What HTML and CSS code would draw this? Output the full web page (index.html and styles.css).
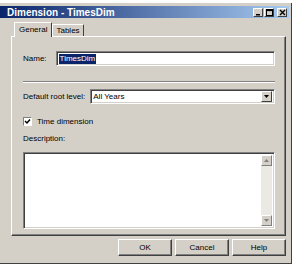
FILE: index.html
```html
<!DOCTYPE html>
<html lang="en">
  <head>
    <meta charset="UTF-8" />
    <title>Dimension - TimesDim</title>
    <link rel="stylesheet" href="styles.css">
  </head>
  <body>
    <div class="window">
      <div class="titlebar">
        <span class="title">Dimension - TimesDim</span>
        <div class="controls">
          <span class="ctl"><svg width="7" height="7" viewBox="0 0 7 7"><rect x="1" y="5" width="4" height="1.5" fill="#000"/></svg></span>
          <span class="ctl"><svg width="7" height="7" viewBox="0 0 7 7"><rect x="0.5" y="0.5" width="6" height="6" fill="none" stroke="#000"/><rect x="0.5" y="0.5" width="6" height="1.6" fill="#000"/></svg></span>
          <span class="ctl close"><svg width="7" height="7" viewBox="0 0 7 7"><path d="M1 1 L6 6 M6 1 L1 6" stroke="#000" stroke-width="1.4"/></svg></span>
        </div>
      </div>

      <div class="tabs">
        <div class="tab active">General</div>
        <div class="tab">Tables</div>
      </div>

      <div class="panel">
        <div class="row name-row">
          <label class="lbl">Name:</label>
          <div class="field name-field"><span class="sel">TimesDim</span></div>
        </div>

        <div class="separator"></div>

        <div class="row level-row">
          <label class="lbl">Default root level:</label>
          <div class="field combo">
            <span class="combo-text">All Years</span>
            <span class="combo-btn"><svg width="5" height="3" viewBox="0 0 5 3"><path d="M0 0 H5 L2.5 3 Z" fill="#000"/></svg></span>
          </div>
        </div>

        <div class="row check-row">
          <span class="checkbox"><svg width="7" height="7" viewBox="0 0 7 7"><path d="M1 3 L3 5 L6 1.5" fill="none" stroke="#000" stroke-width="1.5"/></svg></span>
          <span class="lbl">Time dimension</span>
        </div>

        <div class="desc-label">Description:</div>
        <div class="field textarea">
          <div class="scrollbar">
            <span class="sb-btn"><svg width="5" height="3" viewBox="0 0 5 3"><path d="M0 3 H5 L2.5 0 Z" fill="#808080"/></svg></span>
            <span class="sb-track"></span>
            <span class="sb-btn"><svg width="5" height="3" viewBox="0 0 5 3"><path d="M0 0 H5 L2.5 3 Z" fill="#808080"/></svg></span>
          </div>
        </div>
      </div>

      <div class="buttons">
        <button class="btn">OK</button>
        <button class="btn">Cancel</button>
        <button class="btn">Help</button>
      </div>
    </div>
  </body>
</html>
```

FILE: styles.css
```css
* {
  margin: 0;
  padding: 0;
  box-sizing: border-box;
}

body {
  background: #fff;
  font-family: "Liberation Sans", Arial, sans-serif;
  font-size: 8px;
  color: #000;
}

.window {
  width: 292px;
  height: 261px;
  margin-top: 3px;
  padding-top: 3px;
  background: #d4d0c8;
  border-right: 1px solid #404040;
  border-bottom: 1px solid #404040;
}

.titlebar {
  width: 289px;
  height: 12px;
  display: flex;
  align-items: center;
  justify-content: space-between;
  padding: 0 2px 0 7px;
  background: linear-gradient(to right, #0a246a, #a6caf0);
}

.title {
  color: #fff;
  font-weight: bold;
  font-size: 10px;
}

.controls {
  display: flex;
  gap: 1px;
}

.ctl {
  width: 10px;
  height: 9px;
  display: flex;
  align-items: center;
  justify-content: center;
  background: #d4d0c8;
  border-top: 1px solid #fff;
  border-left: 1px solid #fff;
  border-right: 1px solid #404040;
  border-bottom: 1px solid #404040;
}

.ctl.close {
  margin-left: 2px;
}

.tabs {
  display: flex;
  align-items: flex-end;
  height: 19px;
  padding-left: 14px;
  margin-bottom: -1px;
  position: relative;
  z-index: 1;
}

.tab {
  height: 12px;
  padding: 0 3px;
  line-height: 11px;
  border-top: 1px solid #fff;
  border-left: 1px solid #fff;
  border-right: 1px solid #404040;
  border-radius: 1px 1px 0 0;
  background: #d4d0c8;
  white-space: nowrap;
}

.tab.active {
  height: 15px;
  padding: 0 4px;
  line-height: 14px;
}

.tab + .tab {
  margin-bottom: 1px;
}

.panel {
  width: 275px;
  height: 200px;
  margin-left: 11px;
  padding: 14px 10px 0 11px;
  border-top: 1px solid #fff;
  border-left: 1px solid #fff;
  border-right: 1px solid #404040;
  border-bottom: 1px solid #404040;
  box-shadow: inset -1px -1px 0 #808080;
}

.row {
  display: flex;
  align-items: center;
}

.lbl {
  white-space: nowrap;
}

.field {
  background: #fff;
  border-top: 1px solid #808080;
  border-left: 1px solid #808080;
  border-right: 1px solid #fff;
  border-bottom: 1px solid #fff;
  box-shadow: inset 1px 1px 0 #404040, inset -1px -1px 0 #d4d0c8;
}

.name-field {
  margin-left: 9px;
  flex: 1;
  height: 15px;
  display: flex;
  align-items: center;
  padding-left: 2px;
}

.sel {
  background: #0a246a;
  color: #fff;
  line-height: 10px;
  padding: 0 1px;
}

.separator {
  height: 2px;
  margin-top: 15px;
  border-top: 1px solid #808080;
  border-bottom: 1px solid #fff;
}

.level-row {
  margin-top: 6px;
}

.combo {
  margin-left: 5px;
  flex: 1;
  height: 15px;
  display: flex;
  align-items: center;
  justify-content: space-between;
  padding: 0 2px;
}

.combo-btn {
  width: 11px;
  height: 11px;
  display: flex;
  align-items: center;
  justify-content: center;
  background: #d4d0c8;
  border-top: 1px solid #fff;
  border-left: 1px solid #fff;
  border-right: 1px solid #404040;
  border-bottom: 1px solid #404040;
}

.check-row {
  margin-top: 13px;
  gap: 5px;
}

.checkbox {
  width: 9px;
  height: 9px;
  display: flex;
  align-items: center;
  justify-content: center;
  background: #fff;
  border-top: 1px solid #808080;
  border-left: 1px solid #808080;
  border-right: 1px solid #fff;
  border-bottom: 1px solid #fff;
}

.desc-label {
  margin-top: 8px;
  line-height: 10px;
}

.textarea {
  margin-top: 8px;
  height: 77px;
  display: flex;
  justify-content: flex-end;
  padding: 2px;
}

.scrollbar {
  width: 11px;
  display: flex;
  flex-direction: column;
  background: #ebe9e4;
}

.sb-btn {
  height: 11px;
  display: flex;
  align-items: center;
  justify-content: center;
  background: #d4d0c8;
  border-top: 1px solid #fff;
  border-left: 1px solid #fff;
  border-right: 1px solid #808080;
  border-bottom: 1px solid #808080;
}

.sb-track {
  flex: 1;
}

.buttons {
  display: flex;
  justify-content: flex-end;
  gap: 3px;
  width: 286px;
  margin-top: 3px;
}

.btn {
  width: 54px;
  height: 17px;
  font-family: "Liberation Sans", Arial, sans-serif;
  font-size: 8px;
  background: #d4d0c8;
  border-top: 1px solid #fff;
  border-left: 1px solid #fff;
  border-right: 1px solid #404040;
  border-bottom: 1px solid #404040;
  box-shadow: inset -1px -1px 0 #808080;
}
```
